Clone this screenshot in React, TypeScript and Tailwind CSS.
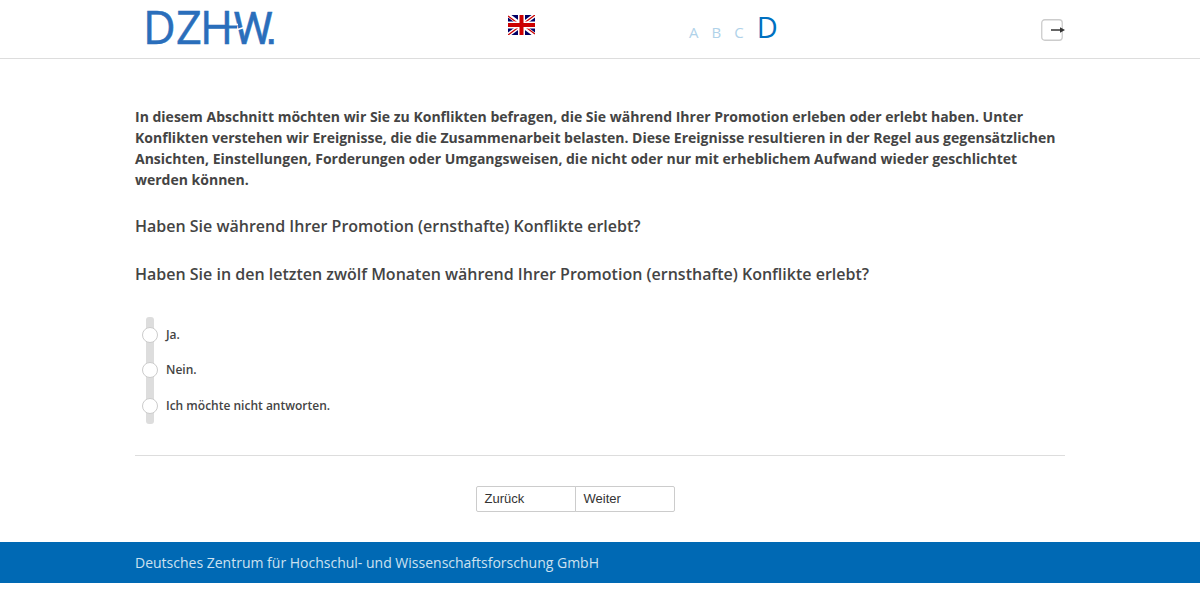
import { useState } from 'react';

const answers = [
  { id: 'yes', label: 'Ja.' },
  { id: 'no', label: 'Nein.' },
  { id: 'noanswer', label: 'Ich möchte nicht antworten.' },
];

function Logo() {
  return (
    <svg width="144" height="48" viewBox="0 0 144 48" className="overflow-visible" role="img" aria-label="DZHW">
      <g fill="#2a6ebb" stroke="#2a6ebb" strokeWidth="0.5" fontSize="45">
        <text x="8 41 65" y="44" fontFamily="Open Sans, sans-serif">
          DZH
        </text>
        <text x="98" y="44" fontFamily="Roboto, sans-serif">
          W
          <tspan x="130" fontFamily="Liberation Sans, sans-serif">
            .
          </tspan>
        </text>
      </g>
      {/* crossbar of the H runs into the W */}
      <path d="M98 24.5h5M101 30l8-2.5" stroke="#fff" strokeWidth="1.5" />
      <path d="M72 27h30" stroke="#2a6ebb" strokeWidth="3" />
    </svg>
  );
}

function UnionJack() {
  return (
    <svg width="27" height="20" viewBox="0 0 27 20" aria-hidden="true">
      <path fill="#006" d="M0 0h27v20H0z" />
      <path d="M0 0l27 20M27 0L0 20" stroke="#fff" strokeWidth="4" />
      <path d="M0 1l13.5 10M27 19L13.5 9M27 0L13.5 10M0 20l13.5-10" stroke="#c00" strokeWidth="1.3" />
      <path d="M13.5 0v20M0 10h27" stroke="#fff" strokeWidth="7" />
      <path d="M13.5 0v20M0 10h27" stroke="#c00" strokeWidth="4" />
    </svg>
  );
}

function ExitIcon() {
  return (
    <svg width="24" height="22" viewBox="0 0 24 22" aria-hidden="true">
      <rect x="0.75" y="0.75" width="20.5" height="20.5" rx="3" fill="none" stroke="#ccc" strokeWidth="1.3" />
      <path d="M10 11h9" stroke="#333" strokeWidth="1.5" />
      <path d="M19 8.3l5 2.7-5 2.7z" fill="#333" />
    </svg>
  );
}

export default function App() {
  const [answer, setAnswer] = useState('');

  return (
    <div className="bg-white font-['Open_Sans',sans-serif] text-[#444]">
      {/* Header */}
      <header className="border-b border-[#ddd]">
        <div className="mx-auto grid h-[58px] max-w-[930px] grid-cols-[373px_181px_1fr_auto] items-start">
          <Logo />
          <button type="button" aria-label="English" className="mt-[15px] justify-self-start">
            <UnionJack />
          </button>
          <div className="flex items-baseline gap-[13px] pt-[5px] text-[15px] text-[#b0d2e9]">
            <span>A</span>
            <span>B</span>
            <span>C</span>
            <span className="text-[29px] leading-[44px] font-medium text-[#0070c0]">D</span>
          </div>
          <button type="button" aria-label="Beenden" className="mt-[19px]">
            <ExitIcon />
          </button>
        </div>
      </header>

      {/* Question */}
      <main className="mx-auto max-w-[930px]">
        <form onSubmit={(e) => e.preventDefault()}>
          <p className="pt-[47px] text-[14px] leading-[21px] font-bold">
            In diesem Abschnitt möchten wir Sie zu Konflikten befragen, die Sie während Ihrer Promotion erleben oder
            erlebt haben. Unter Konflikten verstehen wir Ereignisse, die die Zusammenarbeit belasten. Diese Ereignisse
            resultieren in der Regel aus gegensätzlichen Ansichten, Einstellungen, Forderungen oder Umgangsweisen, die
            nicht oder nur mit erheblichem Aufwand wieder geschlichtet werden können.
          </p>
          <h2 className="mt-6 text-[16px] leading-6 font-semibold">
            Haben Sie während Ihrer Promotion (ernsthafte) Konflikte erlebt?
          </h2>
          <h2 className="mt-6 text-[16px] leading-6 font-semibold">
            Haben Sie in den letzten zwölf Monaten während Ihrer Promotion (ernsthafte) Konflikte erlebt?
          </h2>

          <div className="relative mt-[31px] ml-[7px] grid h-[107px] grid-rows-3">
            <div className="absolute inset-y-0 left-1 w-2 rounded-[3px] bg-[#ddd]" />
            {answers.map((item) => (
              <label key={item.id} className="relative flex items-center gap-2 text-[12px] font-semibold">
                <input
                  type="radio"
                  name="conflict"
                  value={item.id}
                  checked={answer === item.id}
                  onChange={() => setAnswer(item.id)}
                  className="size-4 appearance-none rounded-full border border-[#ccc] bg-white checked:bg-[#0069b4]"
                />
                {item.label}
              </label>
            ))}
          </div>

          <div className="mt-[31px] flex justify-center border-t border-[#ddd] py-[30px] pr-[50px] font-['Liberation_Sans',sans-serif] text-[13px] text-[#333]">
            <button type="button" className="h-[26px] w-[100px] rounded-l-xs border border-[#ccc] px-2 text-left">
              Zurück
            </button>
            <button type="submit" className="-ml-px h-[26px] w-[100px] rounded-r-xs border border-[#ccc] px-2 text-left">
              Weiter
            </button>
          </div>
        </form>
      </main>

      {/* Footer */}
      <footer className="bg-[#0069b4] py-[10px] text-[14px] leading-[21px] text-[#cce1f0]">
        <div className="mx-auto max-w-[930px]">Deutsches Zentrum für Hochschul- und Wissenschaftsforschung GmbH</div>
      </footer>
    </div>
  );
}
